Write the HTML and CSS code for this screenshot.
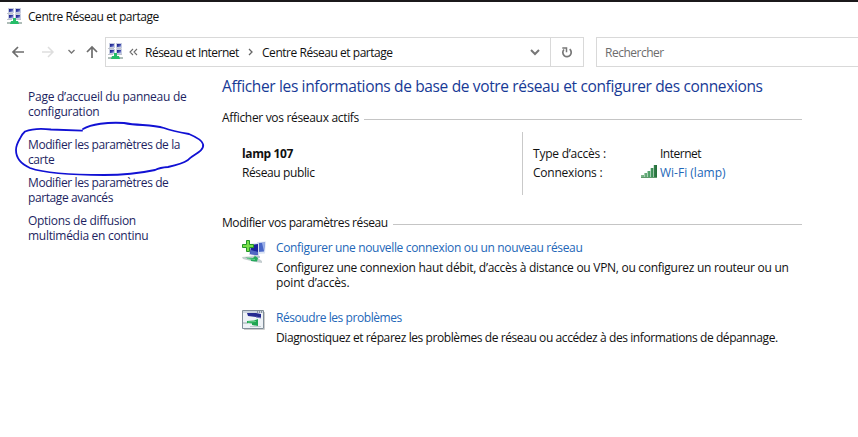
FILE: index.html
```html
<!DOCTYPE html>
<html lang="fr">
<head>
<meta charset="utf-8">
<title>Centre Réseau et partage</title>
<link rel="stylesheet" href="styles.css">
</head>
<body>
<svg class="defs" width="0" height="0" aria-hidden="true">
  <defs>
    <linearGradient id="screen" x1="0" y1="0" x2="1" y2="1"><stop offset="0" stop-color="#15177e"/><stop offset=".5" stop-color="#3943a8"/><stop offset="1" stop-color="#b9c4ee"/></linearGradient>
    <linearGradient id="bars" x1="0" y1="0" x2="1" y2="0"><stop offset="0" stop-color="#83b98f"/><stop offset=".6" stop-color="#479b62"/><stop offset="1" stop-color="#246b38"/></linearGradient>
    <symbol id="network" viewBox="0 0 15 17">
      <g fill="#c6cce0"><path d="M1 0h6v5H1zM8 0h6v5H8zM1 6h6v5H1zM8 6h6v5H8z"/></g>
      <g fill="url(#screen)"><path d="M2 1h4v3H2z"/><path d="M9 1h4v3H9z"/><path d="M2 7h4v3H2z"/><path d="M9 7h4v3H9z"/></g>
      <path d="M0 5.5h6M8.500 5.500h5M0 11.500h5M9 11.500h5" stroke="#adb3bf" stroke-width=".8"/>
      <path d="M0 14h15v2H0z" fill="#aebdb8"/>
      <path d="M6 10h3v3h2l1 3H3l1-3h2z" fill="#25bd68"/>
    </symbol>
  </defs>
</svg>
<div class="edge"></div>
<header class="titlebar">
  <svg class="net-icon"><use href="#network"/></svg>
  <span class="title">Centre Réseau et partage</span>
</header>
<nav class="toolbar">
  <svg class="nav-icons" width="105" height="30" viewBox="0 0 105 30" fill="none">
    <path d="M24 15H13M18 10l-5 5 5 5" stroke="#6d6d6d" stroke-width="1.7"/>
    <path d="M42 15h11M48 10l5 5-5 5" stroke="#dedede" stroke-width="1.500"/>
    <path d="M68.500 13l3 3 3-3" stroke="#777" stroke-width="1.400"/>
    <path d="M92 21V10M87 15l5-5 5 5" stroke="#6d6d6d" stroke-width="1.700"/>
  </svg>
  <div class="address">
    <svg class="net-icon"><use href="#network"/></svg>
    <svg class="collapse" width="9" height="8" fill="none"><path d="M4 1L1 4l3 3M8 1L5 4l3 3" stroke="#6b6b6b" stroke-width="1.100"/></svg>
    <span class="crumb first">Réseau et Internet</span>
    <svg class="sep" width="5" height="8" fill="none"><path d="M1 1l3 3-3 3" stroke="#666" stroke-width="1.300"/></svg>
    <span class="crumb last">Centre Réseau et partage</span>
    <svg class="drop" width="10" height="7" fill="none"><path d="M1 1l4 4 4-4" stroke="#777" stroke-width="2"/></svg>
    <div class="refresh"><svg width="12" height="13" fill="none"><path d="M8.700 3.200A4.200 4.200 0 1 1 3 3.500" stroke="#777" stroke-width="1.700"/><path d="M6 6.200V2H1.800" transform="translate(-.5 0)" stroke="#777" stroke-width="1.500"/></svg></div>
  </div>
  <div class="search"><span class="placeholder">Rechercher</span></div>
</nav>
<div class="body">
  <aside class="sidebar">
    <a class="home"><span class="s1">Page d’accueil du panneau de</span><span class="s2">configuration</span></a>
    <a><span class="s3">Modifier les paramètres de la</span><span class="s4">carte</span></a>
    <a><span class="s5">Modifier les paramètres de</span><span class="s6">partage avancés</span></a>
    <a><span class="s7">Options de diffusion</span><span class="s8">multimédia en continu</span></a>
    <svg class="ink" width="210" height="60" viewBox="0 120 210 60" fill="none"><path d="M82 130.700L51 129.500Q35 127.500 25 131.500Q22 134 20 138.500Q16 145 16 150C16 159 21 164 30 168C47 174 74 175 104 175C126 175 141 173 155 170Q160 167.500 168 167Q182 164 188 160C192 155 205 151 203 144C202 140 196 137 189 134Q172 131 164 128C151 124 139 126 124 123C108 122 91 124 83 129" stroke="#1111d4" stroke-width="1.800" stroke-linejoin="round" stroke-linecap="round"/></svg>
  </aside>
  <main class="content">
    <h1><span class="h">Afficher les informations de base de votre réseau et configurer des connexions</span></h1>
    <h2 class="rule active"><span class="r1">Afficher vos réseaux actifs</span></h2>
    <section class="network">
      <div class="name"><strong>lamp 107</strong><span class="kind">Réseau public</span></div>
      <dl class="details">
        <dt><span class="d1">Type d’accès :</span></dt><dd><span class="d2">Internet</span></dd>
        <dt><span class="d3">Connexions :</span></dt>
        <dd><svg class="signal" width="16" height="13"><path d="M0 10h3v3H0zM3.400 8h2.600v5H3.400zM6.500 6h2.700v7H6.500zM9.700 3h2.600v10H9.700zM12.800 0H16v13h-3.200z" fill="url(#bars)"/><path d="M0 12.500h16" stroke="#5e9a6b"/></svg><a class="d4">Wi-Fi (lamp)</a></dd>
      </dl>
    </section>
    <h2 class="rule"><span class="r2">Modifier vos paramètres réseau</span></h2>
    <section class="task">
      <svg class="task-icon" width="26" height="26" viewBox="0 0 26 26">
        <path d="M15 3l9-.5-1 12-7 .5z" fill="#dce4f4"/><path d="M16 4l7-.5-1 9-6 .5z" fill="#4967c8"/><path d="M20 4h3l-1 8z" fill="#9bb0e8"/>
        <path d="M7 5l10-1v13l-10-1z" fill="#d5dcef"/><path d="M9 6l7-1v11l-8-1z" fill="#19239a"/><path d="M9 11l7 2v3l-8-1z" fill="#5268c4"/>
        <path d="M12 16l6 1v2h-5z" fill="#bac3d4"/>
        <path d="M0 18l13-1 7 5v2l-7-1-12-3z" fill="#c5ced0"/><path d="M3 18.500l8 .5 2-2 3 2-1 3.500-6-.5v-1.500z" fill="#24aa5b"/><path d="M5 19.500l8 1" stroke="#68ce90"/>
        <path d="M4.500 1.500h3v4h4v3h-4v4h-3v-4h-4v-3h4z" fill="#79df4a" stroke="#24952a"/>
      </svg>
      <div><a class="t1">Configurer une nouvelle connexion ou un nouveau réseau</a><p><span class="t2">Configurez une connexion haut débit, d’accès à distance ou VPN, ou configurez un routeur ou un</span><span class="t3">point d’accès.</span></p></div>
    </section>
    <section class="task second">
      <svg class="task-icon" width="26" height="22" viewBox="0 0 26 22">
        <path d="M.5 1.500h21v18H.5z" fill="#eef2f6" stroke="#818e99"/><path d="M2 20.500h20.500V3" fill="none" stroke="#ccc"/><path d="M1 2h20v2H1z" fill="#ccd5df"/><path d="M15 3h1m1 0h1m1 0h1" stroke="#435060"/>
        <path d="M5 4h9l5 1v4l-5-1-8-1z" fill="#252b91"/><path d="M14 8l5 1" stroke="#727bbd"/><path d="M1 13h5v2H1z" fill="#c4ced1"/><path d="M5 12l7-.5 4-1.500v7l-6-1v-1.500l-5-.5z" fill="#20a552"/><path d="M6 13l8-.5" stroke="#65d087"/><path d="M8 17.500h11" stroke="#c2cbd1"/>
      </svg>
      <div><a class="t4">Résoudre les problèmes</a><p><span class="t5">Diagnostiquez et réparez les problèmes de réseau ou accédez à des informations de dépannage.</span></p></div>
    </section>
  </main>
</div>
</body>
</html>
```
FILE: styles.css
```css
* { box-sizing: border-box; }
body { margin: 0; width: 858px; height: 437px; overflow: hidden; background: #fff; color: #111; font: 12px/15px "Open Sans", "Noto Sans", sans-serif; }
.defs { position: absolute; }
svg { flex: none; display: block; }
.edge { height: 2px; background: #1b191b; }
.titlebar { height: 35px; display: flex; align-items: flex-start; padding: 6px 0 0 7px; }
.titlebar .title { margin: 1px 0 0 6px; letter-spacing: -.45px; }
.net-icon { width: 15px; height: 17px; }
.toolbar { height: 30px; display: flex; }
.address { width: 479px; border: 1px solid #d9d9d9; display: flex; align-items: center; padding-left: 2px; }
.address .net-icon { margin-top: -1px; }
.collapse { margin-left: 6px; }
.crumb { white-space: nowrap; }
.first { margin-left: 7px; width: 95px; letter-spacing: -.5px; }
.sep { margin-left: 8px; }
.last { margin-left: 9px; width: 132px; letter-spacing: -.46px; }
.drop { margin-left: auto; }
.refresh { width: 33px; height: 28px; margin-left: 10px; border-left: 1px solid #d9d9d9; display: flex; align-items: center; justify-content: center; }
.search { flex: 1; margin-left: 12px; border: 1px solid #d9d9d9; border-right: 0; padding: 7px 8px 5px; color: #6d6d6d; letter-spacing: -.5px; }
.body { display: flex; }
.sidebar { position: relative; width: 222px; padding: 22px 0 0 28px; color: #1d1f62; white-space: nowrap; }
.sidebar a { display: block; height: 30px; margin-bottom: 8px; }
.sidebar span, .content span, .content strong, .task a, .details a { display: block; line-height: 15px; }
.sidebar .home { margin-bottom: 18px; }
.s1, .s2 { letter-spacing: -.25px; }
.s3, .s4, .s5, .s6 { letter-spacing: -.41px; }
.s7, .s8 { letter-spacing: -.29px; }
.ink { position: absolute; left: 0; top: 53px; }
.content { width: 580px; padding-top: 9px; white-space: nowrap; }
h1 { margin: 0; height: 21px; font-size: 15.5px; font-weight: 400; color: #173a96; }
.content .h { line-height: 21px; letter-spacing: -.35px; }
.rule { margin: 0; height: 15px; font-size: 12px; font-weight: 400; display: flex; align-items: center; gap: 5px; }
.rule::after { content: ""; flex: 1; height: 1px; margin-top: 3px; background: #c5c5c5; }
.r1 { letter-spacing: -.32px; }
.r2 { letter-spacing: -.43px; }
.active { margin-top: 13px; }
.network { display: flex; height: 63px; margin: 7px 0 20px; }
.name { width: 301px; padding: 14px 0 0 20px; border-right: 1px solid #c9c9c9; display: flex; flex-direction: column; align-items: flex-start; gap: 4px; letter-spacing: -.39px; }
.details { margin: 0; padding: 14px 0 0 10px; display: grid; grid-template-columns: 108px auto; grid-auto-rows: 15px; row-gap: 4px; align-content: start; }
.d1, .d3 { letter-spacing: -.23px; }
.d2 { letter-spacing: -.5px; }
dd { margin: 0; padding-left: 19px; display: flex; }
.signal { margin: 0 3px 0 -19px; }
.details a, .task a { color: #2367b8; }
.task { display: flex; height: 52px; padding-left: 20px; margin-top: 9px; }
.task > div { padding-top: 1px; }
.task-icon { margin-right: 8px; }
.task p { margin: 5px 0 0; }
.t1 { letter-spacing: -.34px; }
.t2 { letter-spacing: -.28px; }
.t3 { letter-spacing: -.15px; }
.t4 { letter-spacing: -.43px; }
.t5 { letter-spacing: -.41px; }
.second { margin-top: 18px; }
```
